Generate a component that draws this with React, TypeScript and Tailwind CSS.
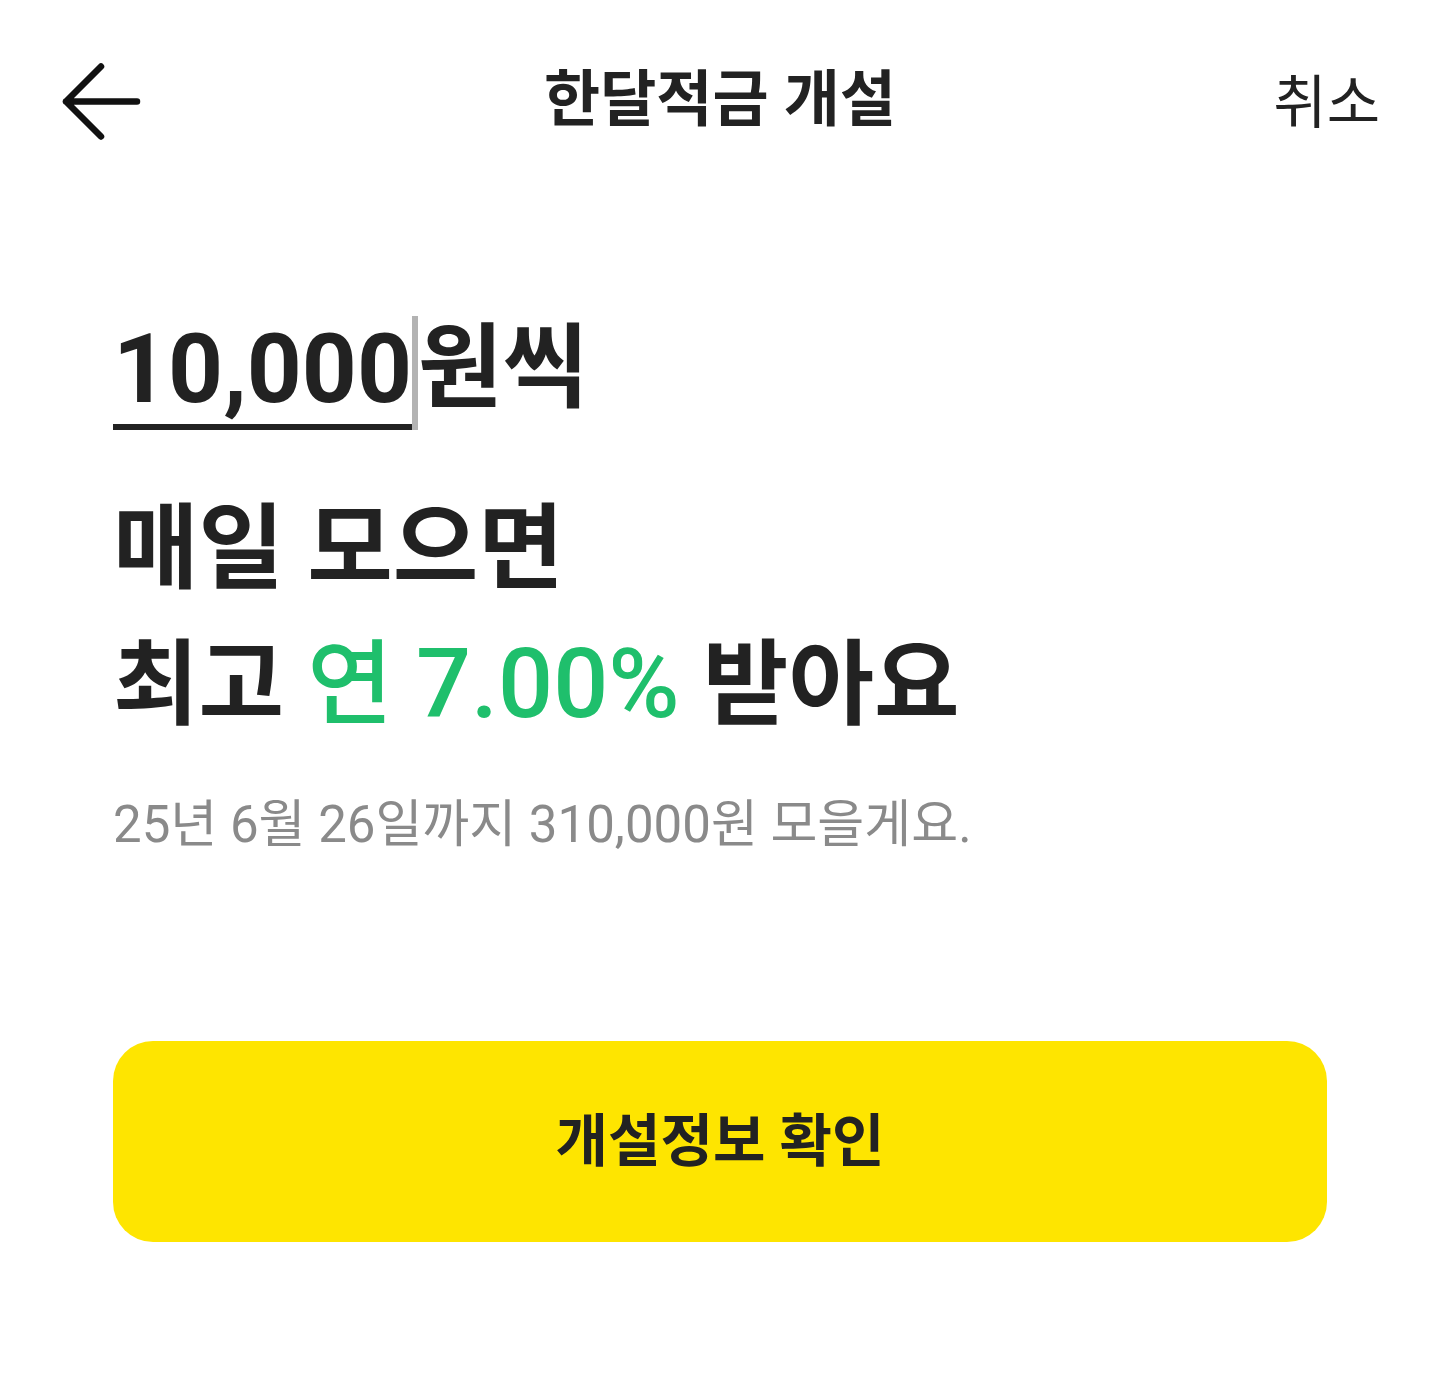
import React from "react";

export default function App() {
  const font = { fontFamily: "Roboto, 'Noto Sans CJK KR', sans-serif" };
  return (
    <div className="w-[1440px] h-[1373px] bg-white text-[#222222]" style={font}>
      <header className="h-[200px] relative flex items-center justify-center">
        <button className="absolute left-[58px] top-[62px] w-[86px] h-[80px] flex items-center justify-center">
          <svg width="86" height="80" viewBox="0 0 86 80" fill="none">
            <path d="M79 39.5H8M43 4.5L8 39.5L43 74.5" stroke="#111111" strokeWidth="6.5" strokeLinecap="round" strokeLinejoin="round" />
          </svg>
        </button>
        <h1 className="text-[61px] font-bold leading-none">한달적금 개설</h1>
        <span className="absolute right-[60px] top-[74px] text-[58px] leading-none text-[#222222]">취소</span>
      </header>

      <section className="pl-[113px] pt-[110px]">
        <div className="flex items-end h-[120px] leading-none font-bold text-[96px]">
          <span className="border-b-[6px] border-[#222222] leading-[110px]">10,000</span>
          <span className="w-[6px] h-[114px] bg-[#b3b3b3] self-end" />
          <span className="leading-[110px] pb-[6px] text-[92px]">원씩</span>
        </div>
        <div className="mt-[52px] text-[93px] font-bold leading-[135px]">
          <div>매일 모으면</div>
          <div>
            최고 <span className="text-[#1fbf6c] font-medium">연 <span className="text-[97px]">7.00%</span></span> 받아요
          </div>
        </div>
        <p className="mt-[46px] text-[51px] leading-none text-[#8a8a8a]">25년 6월 26일까지 310,000원 모을게요.</p>
      </section>

      <div className="px-[113px] mt-[191px]">
        <button className="w-full h-[201px] rounded-[40px] bg-[#fee500] text-[57px] font-bold text-[#222222] flex items-center justify-center">
          개설정보 확인
        </button>
      </div>
    </div>
  );
}
